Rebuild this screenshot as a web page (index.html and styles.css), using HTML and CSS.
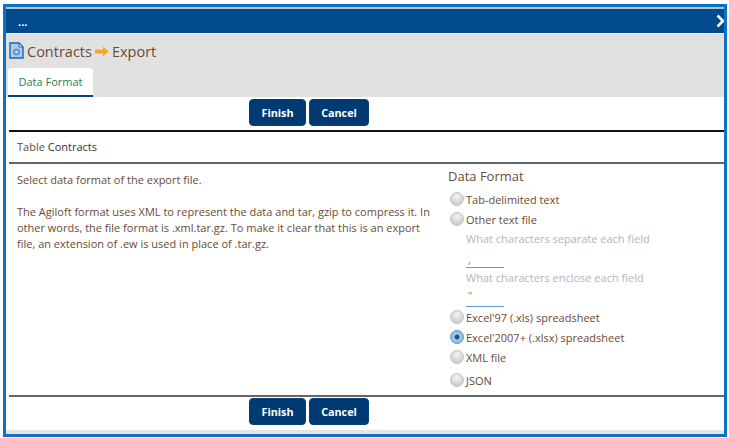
FILE: index.html
```html
<!DOCTYPE html>
<html lang="en">
<head>
  <meta charset="UTF-8" />
  <title>Contracts Export</title>
  <link rel="stylesheet" href="styles.css">
</head>
<body>
  <div class="frame">
    <div class="titlebar">
      <span class="dots">...</span>
      <svg class="chevron" width="9" height="14" viewBox="0 0 9 14"><path d="M2.5 1.5 L8 7 L2.5 12.5" fill="none" stroke="#fff" stroke-width="2.6"/></svg>
    </div>
    <div class="band">
      <div class="crumbs">
        <svg class="docicon" width="15" height="17" viewBox="0 0 15 17">
          <path d="M1 1 H10 L14 5 V16 H1 Z" fill="#a9cdea" stroke="#1a66ab" stroke-width="1.4"/>
          <path d="M10 1 V5 H14 Z" fill="#e6f1fa" stroke="#1a66ab"/>
          <circle cx="7.5" cy="10" r="3.6" fill="#5d9bd0"/>
          <circle cx="7.5" cy="10" r="1.3" fill="#d8e8f5"/>
        </svg>
        <span>Contracts</span>
        <svg class="arrow" width="14" height="11" viewBox="0 0 14 11"><path d="M0 3.5 H8 V0.5 L13.5 5.5 L8 10.5 V7.5 H0 Z" fill="#f5a623"/></svg>
        <span>Export</span>
      </div>
      <div class="tab">Data Format</div>
    </div>
    <div class="btnrow">
      <button class="btn finish">Finish</button>
      <button class="btn cancel">Cancel</button>
    </div>
    <div class="tablerow"><span class="lbl">Table</span> Contracts</div>
    <div class="main">
      <div class="desc">
        <p>Select data format of the export file.</p>
        <p>The Agiloft format uses XML to represent the data and tar, gzip to compress it. In other words, the file format is .xml.tar.gz. To make it clear that this is an export file, an extension of .ew is used in place of .tar.gz.</p>
      </div>
      <div class="opts">
        <div class="optstitle">Data Format</div>
        <div class="opt"><span class="radio"></span>Tab-delimited text</div>
        <div class="opt"><span class="radio"></span>Other text file</div>
        <div class="sub">
          <div class="sublabel">What characters separate each field</div>
          <div class="subinput first">,</div>
          <div class="sublabel">What characters enclose each field</div>
          <div class="subinput">"</div>
        </div>
        <div class="opt"><span class="radio"></span>Excel'97 (.xls) spreadsheet</div>
        <div class="opt"><span class="radio on"></span>Excel'2007+ (.xlsx) spreadsheet</div>
        <div class="opt"><span class="radio"></span>XML file</div>
        <div class="opt last"><span class="radio"></span>JSON</div>
      </div>
    </div>
    <div class="btnrow bottom">
      <button class="btn finish">Finish</button>
      <button class="btn cancel">Cancel</button>
    </div>
  </div>
</body>
</html>
```

FILE: styles.css
```css
html, body {
  margin: 0;
  background: #fff;
}
body {
  width: 729px;
  height: 438px;
  overflow: hidden;
  font-family: "Open Sans", "Noto Sans", sans-serif;
  font-size: 11px;
  color: #6b4a36;
}
.frame {
  box-sizing: border-box;
  width: 724px;
  height: 433px;
  margin: 4px 0 0 3px;
  border: 3px solid #0b72c4;
  background: #fff;
  display: flex;
  flex-direction: column;
}
.titlebar {
  box-sizing: border-box;
  height: 26px;
  border-top: 2px solid #b8c2cc;
  background: #004a8e;
  display: flex;
  align-items: center;
  justify-content: space-between;
  padding-left: 12px;
  color: #fff;
}
.dots {
  font-weight: 700;
}
.band {
  height: 64px;
  box-sizing: border-box;
  background: #e1e1e1;
  border-top: 1px solid #f0f0f0;
  display: flex;
  flex-direction: column;
  justify-content: space-between;
  padding-left: 2px;
}
.crumbs {
  display: flex;
  align-items: center;
  gap: 3px;
  font-size: 14.5px;
  margin-top: 7px;
  height: 20px;
}
.docicon {
  margin: -2px 0 0 1px;
}
.tab {
  box-sizing: border-box;
  width: 85px;
  height: 29px;
  background: #fff;
  border-bottom: 2px solid #0a3f78;
  border-radius: 4px 4px 0 0;
  color: #2a7d5a;
  text-align: center;
  line-height: 27px;
}
.btnrow {
  height: 33px;
  display: flex;
  gap: 3px;
  padding: 2px 0 0 243px;
  box-sizing: border-box;
}
.btn {
  height: 27px;
  padding: 0;
  border: 1px solid #0a3f78;
  border-radius: 4px;
  background: #003a73;
  color: #fff;
  font-family: inherit;
  font-size: 10.8px;
  font-weight: 700;
}
.finish { width: 57px; }
.cancel { width: 60px; }
.tablerow {
  height: 30px;
  margin-left: 3px;
  padding-left: 8px;
  border-top: 2px solid #111;
  border-bottom: 2px solid #666;
  line-height: 29px;
  color: #333;
}
.lbl { color: #6b4a36; }
.main {
  display: flex;
  height: 233px;
  margin-left: 3px;
  border-bottom: 2px solid #666;
  box-sizing: border-box;
}
.desc {
  box-sizing: border-box;
  width: 439px;
  padding: 8px 14px 0 8px;
  line-height: 16px;
}
.desc p {
  margin: 0 0 16px;
}
.opts {
  flex: 1;
}
.optstitle {
  font-size: 13px;
  line-height: 18px;
  margin-top: 3px;
  margin-bottom: 4px;
}
.opt {
  display: flex;
  align-items: center;
  height: 20px;
}
.radio {
  box-sizing: border-box;
  width: 14px;
  height: 14px;
  margin: 0 2px;
  border-radius: 50%;
  border: 1px solid #c4c4c4;
  background: radial-gradient(circle at 50% 30%, #f4f4f4, #bfbfbf);
}
.radio.on {
  border-color: #5d9bd0;
  background: radial-gradient(circle, #1f4f7a 0 2px, #a8cdea 3px, #6ea6d3);
}
.sub {
  margin-left: 18px;
  padding-top: 1px;
  color: #b5b5b5;
}
.sublabel {
  line-height: 18px;
}
.subinput {
  box-sizing: border-box;
  width: 38px;
  height: 20px;
  border-bottom: 1px solid #5aa0dc;
  padding-left: 2px;
  line-height: 18px;
  color: #888;
}
.subinput.first {
  line-height: 23px;
  margin-bottom: 1px;
}
.last { margin-top: 3px; }
.bottom {
  flex: 1;
  padding-top: 1px;
  border-bottom: 4px solid #e4e4e4;
}
```
